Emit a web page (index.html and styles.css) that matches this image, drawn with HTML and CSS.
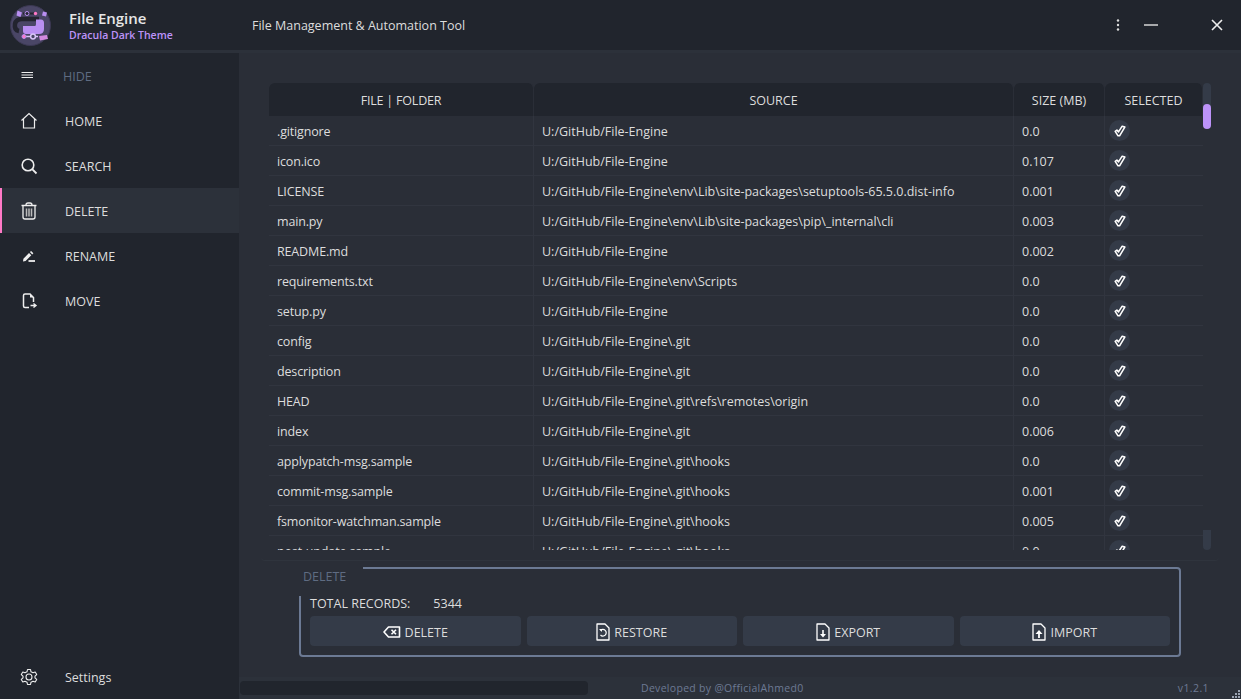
FILE: index.html
```html
<!DOCTYPE html>
<html lang="en">
<head>
    <meta charset="UTF-8">
    <title>File Engine</title>
    <link rel="stylesheet" href="styles.css">
</head>
<body>
    <svg class="defs" width="0" height="0">
        <symbol id="check" viewBox="0 0 16 16">
            <path d="M2.5 8.5 L4.5 7 L6.3 9 L10.5 2.5 L13.5 3.5 L7.5 13.5 L5.8 13.5 Z" fill="#343b48" stroke="#fff" stroke-width="1.8" stroke-linejoin="round"/>
        </symbol>
    </svg>

    <header class="titlebar">
        <div class="brand">
            <svg class="logo" width="41" height="41" viewBox="0 0 41 41">
                <circle cx="20.5" cy="20.5" r="20" fill="#4a4666" stroke="#3c3953"/>
                <path d="M9 26 Q4 25 5 19 Q6 14 12 14 H29" fill="none" stroke="#23242f" stroke-width="4.5"/>
                <path d="M13 8.5 H26" stroke="#23242f" stroke-width="2"/>
                <path d="M13 21 H25 Q26 21 26 19 V14.5 H31 Q34 14.5 34 18 V24 Q34 29 29 29 H16 Q13 29 13 26 Z" fill="#b98ff2"/>
                <path d="M7.5 5.5 L12 7.5 L10.5 12 L6.5 10.5 Z M33 6.5 L37 7.5 L36 11.5 L32 10.5 Z" fill="#b98ff2"/>
                <circle cx="17" cy="8.5" r="2" fill="#23242f" stroke="#b98ff2"/>
                <circle cx="25.5" cy="8.5" r="1.7" fill="#ff79c6"/>
                <path d="M16 31.5 H28" stroke="#d8c4f8" stroke-width="1.5"/>
                <circle cx="14" cy="31.5" r="2" fill="#ff79c6" stroke="#b98ff2"/>
                <circle cx="23" cy="31.5" r="2.4" fill="#4a4666" stroke="#d8c4f8" stroke-width="1.5"/>
                <path d="M29 31 L37 30 L38 34 L30 35.5 Z" fill="#d289e0"/>
            </svg>
            <div class="brand-text">
                <div class="app-name">File Engine</div>
                <div class="app-theme">Dracula Dark Theme</div>
            </div>
        </div>
        <div class="app-desc">File Management &amp; Automation Tool</div>
        <div class="win-btns">
            <svg width="16" height="16" viewBox="0 0 16 16"><circle cx="8" cy="3.5" r="1.2" fill="#ddd"/><circle cx="8" cy="8" r="1.2" fill="#ddd"/><circle cx="8" cy="12.5" r="1.2" fill="#ddd"/></svg>
            <svg class="win-min" width="16" height="16" viewBox="0 0 16 16"><path d="M1 8 H15" stroke="#ccc" stroke-width="1.6"/></svg>
            <svg class="win-close" width="16" height="16" viewBox="0 0 16 16"><path d="M3 3 L13 13 M13 3 L3 13" stroke="#eee" stroke-width="1.6"/></svg>
        </div>
    </header>

    <div class="body-wrap">
        <nav class="sidebar">
            <div class="nav-item nav-hide">
                <svg width="16" height="18" viewBox="0 0 16 18"><path d="M1.5 5.5 H13 M1.5 8 H13 M1.5 10.5 H13" stroke="#eee" stroke-width="1.2"/></svg>
                <span>HIDE</span>
            </div>
            <div class="nav-item">
                <svg width="18" height="18" viewBox="0 0 18 18"><path d="M1.5 8.5 L9 1.5 L16.5 8.5 M3.5 7 V16 H14.5 V7" fill="none" stroke="#eee" stroke-width="1.2"/></svg>
                <span>HOME</span>
            </div>
            <div class="nav-item">
                <svg width="18" height="18" viewBox="0 0 18 18"><circle cx="8" cy="8" r="5.8" fill="none" stroke="#eee" stroke-width="1.6"/><path d="M12.2 12.2 L16.5 16.5" stroke="#eee" stroke-width="1.8"/></svg>
                <span>SEARCH</span>
            </div>
            <div class="nav-item active">
                <svg width="18" height="18" viewBox="0 0 18 18"><path d="M1.5 3.5 H16.5 M6 3 Q6 1 8 1 H10 Q12 1 12 3 M3 4 V15 Q3 17 5 17 H13 Q15 17 15 15 V4" fill="none" stroke="#eee" stroke-width="1.3"/><path d="M6.5 6.5 V14.5 M9 6.5 V14.5 M11.5 6.5 V14.5" stroke="#bbb" stroke-width="1.5"/></svg>
                <span>DELETE</span>
            </div>
            <div class="nav-item">
                <svg width="18" height="18" viewBox="0 0 18 18"><path d="M3 14.5 L3.4 11.8 L9 6 L11.3 8.3 L5.6 14 Z M9.9 5.1 L11.1 3.9 L13.4 6.2 L12.2 7.4 Z" fill="#eee"/><path d="M8.5 14 H15" stroke="#eee" stroke-width="1.8"/></svg>
                <span>RENAME</span>
            </div>
            <div class="nav-item">
                <svg width="18" height="18" viewBox="0 0 18 18"><path d="M9 15.5 H5 Q3.5 15.5 3.5 14 V3.5 Q3.5 2 5 2 H10 L13.5 5.5 V10" fill="none" stroke="#eee" stroke-width="1.5"/><path d="M10 2 V5.5 H13.5 Z" fill="#eee"/><path d="M10.5 13.5 H15.5 M13.5 11.5 L16 13.5 L13.5 15.5" fill="none" stroke="#eee" stroke-width="1.4"/></svg>
                <span>MOVE</span>
            </div>
            <div class="nav-item nav-settings">
                <svg width="18" height="18" viewBox="0 0 18 18"><path d="M7.5 1.5 H10.5 L11 3.8 L13 4.8 L15.2 4 L16.7 6.6 L15 8.1 V9.9 L16.7 11.4 L15.2 14 L13 13.2 L11 14.2 L10.5 16.5 H7.5 L7 14.2 L5 13.2 L2.8 14 L1.3 11.4 L3 9.9 V8.1 L1.3 6.6 L2.8 4 L5 4.8 L7 3.8 Z" fill="none" stroke="#eee" stroke-width="1.1" stroke-linejoin="round"/><circle cx="9" cy="9" r="3" fill="none" stroke="#eee" stroke-width="1.1"/></svg>
                <span>Settings</span>
            </div>
        </nav>

        <main class="content">
            <section class="table-panel">
                <div class="table-wrap">
                    <div class="table">
                        <div class="row head">
                            <div>FILE | FOLDER</div>
                            <div>SOURCE</div>
                            <div>SIZE (MB)</div>
                            <div>SELECTED</div>
                        </div>
                        <div class="table-body">
                            <div class="row"><div>.gitignore</div><div>U:/GitHub/File-Engine</div><div>0.0</div><div><span class="tick"><svg width="14" height="14"><use href="#check"/></svg></span></div></div>
                            <div class="row"><div>icon.ico</div><div>U:/GitHub/File-Engine</div><div>0.107</div><div><span class="tick"><svg width="14" height="14"><use href="#check"/></svg></span></div></div>
                            <div class="row"><div>LICENSE</div><div>U:/GitHub/File-Engine\env\Lib\site-packages\setuptools-65.5.0.dist-info</div><div>0.001</div><div><span class="tick"><svg width="14" height="14"><use href="#check"/></svg></span></div></div>
                            <div class="row"><div>main.py</div><div>U:/GitHub/File-Engine\env\Lib\site-packages\pip\_internal\cli</div><div>0.003</div><div><span class="tick"><svg width="14" height="14"><use href="#check"/></svg></span></div></div>
                            <div class="row"><div>README.md</div><div>U:/GitHub/File-Engine</div><div>0.002</div><div><span class="tick"><svg width="14" height="14"><use href="#check"/></svg></span></div></div>
                            <div class="row"><div>requirements.txt</div><div>U:/GitHub/File-Engine\env\Scripts</div><div>0.0</div><div><span class="tick"><svg width="14" height="14"><use href="#check"/></svg></span></div></div>
                            <div class="row"><div>setup.py</div><div>U:/GitHub/File-Engine</div><div>0.0</div><div><span class="tick"><svg width="14" height="14"><use href="#check"/></svg></span></div></div>
                            <div class="row"><div>config</div><div>U:/GitHub/File-Engine\.git</div><div>0.0</div><div><span class="tick"><svg width="14" height="14"><use href="#check"/></svg></span></div></div>
                            <div class="row"><div>description</div><div>U:/GitHub/File-Engine\.git</div><div>0.0</div><div><span class="tick"><svg width="14" height="14"><use href="#check"/></svg></span></div></div>
                            <div class="row"><div>HEAD</div><div>U:/GitHub/File-Engine\.git\refs\remotes\origin</div><div>0.0</div><div><span class="tick"><svg width="14" height="14"><use href="#check"/></svg></span></div></div>
                            <div class="row"><div>index</div><div>U:/GitHub/File-Engine\.git</div><div>0.006</div><div><span class="tick"><svg width="14" height="14"><use href="#check"/></svg></span></div></div>
                            <div class="row"><div>applypatch-msg.sample</div><div>U:/GitHub/File-Engine\.git\hooks</div><div>0.0</div><div><span class="tick"><svg width="14" height="14"><use href="#check"/></svg></span></div></div>
                            <div class="row"><div>commit-msg.sample</div><div>U:/GitHub/File-Engine\.git\hooks</div><div>0.001</div><div><span class="tick"><svg width="14" height="14"><use href="#check"/></svg></span></div></div>
                            <div class="row"><div>fsmonitor-watchman.sample</div><div>U:/GitHub/File-Engine\.git\hooks</div><div>0.005</div><div><span class="tick"><svg width="14" height="14"><use href="#check"/></svg></span></div></div>
                            <div class="row"><div>post-update.sample</div><div>U:/GitHub/File-Engine\.git\hooks</div><div>0.0</div><div><span class="tick"><svg width="14" height="14"><use href="#check"/></svg></span></div></div>
                        </div>
                    </div>
                    <div class="scrollbar">
                        <div class="scroll-cap"></div>
                        <div class="scroll-handle"></div>
                        <div class="scroll-cap scroll-cap-end"></div>
                    </div>
                </div>
            </section>

            <section class="group">
                <div class="group-label">DELETE</div>
                <div class="records"><span>TOTAL RECORDS:</span><span>5344</span></div>
                <div class="actions">
                    <button class="btn">
                        <svg width="18" height="16" viewBox="0 0 18 16"><path d="M1 8 L5.5 3 H16.5 V13 H5.5 Z" fill="none" stroke="#fff" stroke-width="1.6" stroke-linejoin="round"/><path d="M8.5 5.8 L13 10.2 M13 5.8 L8.5 10.2" stroke="#fff" stroke-width="1.6"/></svg>
                        DELETE
                    </button>
                    <button class="btn">
                        <svg width="14" height="18" viewBox="0 0 14 18"><path d="M1 1 H9 L13 5 V17 H1 Z" fill="none" stroke="#fff" stroke-width="1.3" stroke-linejoin="round"/><path d="M4.5 7.5 A3.3 3.3 0 1 1 4.5 12" fill="none" stroke="#fff" stroke-width="1.2"/><path d="M3 6 H6 V9 Z" fill="#fff"/></svg>
                        RESTORE
                    </button>
                    <button class="btn">
                        <svg width="14" height="18" viewBox="0 0 14 18"><path d="M1 1 H9 L13 5 V17 H1 Z" fill="none" stroke="#fff" stroke-width="1.3" stroke-linejoin="round"/><path d="M7 7 V12" stroke="#fff" stroke-width="1.6"/><path d="M4 11 H10 L7 14.5 Z" fill="#fff"/></svg>
                        EXPORT
                    </button>
                    <button class="btn">
                        <svg width="14" height="18" viewBox="0 0 14 18"><path d="M1 1 H9 L13 5 V17 H1 Z" fill="none" stroke="#fff" stroke-width="1.3" stroke-linejoin="round"/><path d="M7 10 V15" stroke="#fff" stroke-width="1.8"/><path d="M3.5 11 H10.5 L7 7 Z" fill="#fff"/></svg>
                        IMPORT
                    </button>
                </div>
            </section>

            <footer class="statusbar">
                <div class="status-progress"></div>
                <div class="status-credit">Developed by @OfficialAhmed0</div>
                <div class="status-version">v1.2.1</div>
                <svg class="grip" width="10" height="10" viewBox="0 0 10 10"><path d="M7 1 h2 v2 h-2 z M4 4 h2 v2 h-2 z M7 4 h2 v2 h-2 z M1 7 h2 v2 h-2 z M4 7 h2 v2 h-2 z M7 7 h2 v2 h-2 z" fill="#9aa3b2"/></svg>
            </footer>
        </main>
    </div>
</body>
</html>
```

FILE: styles.css
```css
* {
    box-sizing: border-box;
}

body {
    margin: 0;
    width: 1241px;
    height: 699px;
    overflow: hidden;
    display: flex;
    flex-direction: column;
    background-color: #21252b;
    color: #dddddd;
    font-family: "Open Sans", "Noto Sans", sans-serif;
    font-size: 12.5px;
}

.defs {
    position: absolute;
}

/* title bar */
.titlebar {
    height: 53px;
    flex: none;
    display: flex;
    align-items: center;
    background-color: #21252d;
    border-bottom: 3px solid #2c313a;
}

.brand {
    width: 239px;
    display: flex;
    align-items: center;
    padding-left: 10px;
}

.logo {
    flex: none;
    margin-top: 1px;
}

.brand-text {
    margin-left: 18px;
    padding-top: 2px;
}

.app-name {
    font-size: 15px;
    font-weight: 600;
    line-height: 16px;
    margin-bottom: 2px;
    color: #e6e6e6;
}

.app-theme {
    font-size: 10.5px;
    font-weight: 600;
    line-height: 14px;
    color: #bd93f9;
}

.app-desc {
    margin-left: 13px;
    flex: 1;
}

.win-btns {
    display: flex;
    align-items: center;
    padding-right: 16px;
}

.win-min {
    margin-left: 17px;
}

.win-close {
    margin-left: 50px;
}

/* layout */
.body-wrap {
    flex: 1;
    display: flex;
    min-height: 0;
}

/* sidebar */
.sidebar {
    width: 239px;
    flex: none;
    display: flex;
    flex-direction: column;
    background-color: #21252d;
}

.nav-item {
    height: 45px;
    flex: none;
    display: flex;
    align-items: center;
    padding-left: 20px;
}

.nav-item span {
    margin-left: 27px;
    padding-top: 1px;
}

.nav-hide {
    color: #5f6c82;
}

.nav-item.active {
    background-color: #2c313a;
    border-left: 2px solid #ff79c6;
    padding-left: 18px;
}

.nav-settings {
    margin-top: auto;
}

/* content */
.content {
    flex: 1;
    min-width: 0;
    display: flex;
    flex-direction: column;
    background-color: #2a2e37;
}

.table-panel {
    height: 508px;
    flex: none;
    padding: 30px 0 0 8px;
    margin: 0 22px;
    border-bottom: 1px solid #2f343d;
    border-radius: 0 0 4px 4px;
}

.table-wrap {
    display: flex;
    height: 467px;
}

.table {
    width: 934px;
    flex: none;
    display: flex;
    flex-direction: column;
}

.row {
    display: grid;
    grid-template-columns: 265px 480px 91px 98px;
    height: 30px;
    flex: none;
    border-bottom: 1px solid #31353f;
}

.row > div {
    display: flex;
    align-items: center;
    padding: 2px 0 0 8px;
    border-right: 1px solid #31353f;
    white-space: nowrap;
    overflow: hidden;
}

.row > div:first-child {
    letter-spacing: -0.15px;
}

.row > div:last-child {
    padding: 0 0 0 4px;
    border-right: none;
}

.head {
    height: 33px;
    border-bottom: none;
}

.head > div,
.head > div:first-child,
.head > div:last-child {
    justify-content: center;
    padding: 2px 0 0 0;
    background-color: #21252d;
    border-right: 1px solid #2a2e37;
    border-radius: 6px 6px 0 0;
}

.head > div:first-child {
    letter-spacing: -0.2px;
}

.table-body {
    flex: 1;
    overflow: hidden;
}

.tick {
    width: 21px;
    height: 21px;
    border-radius: 50%;
    background-color: #343b48;
    display: flex;
    align-items: center;
    justify-content: center;
}

.scrollbar {
    width: 8px;
    flex: none;
    height: 467px;
    display: flex;
    flex-direction: column;
}

.scroll-cap {
    height: 24px;
    background-color: #343b48;
    border-radius: 4px 4px 0 0;
    margin-bottom: -3px;
}

.scroll-cap-end {
    height: 20px;
    margin-top: auto;
    margin-bottom: 0;
    border-radius: 0 0 4px 4px;
}

.scroll-handle {
    height: 25px;
    position: relative;
    background-color: #bd93f9;
    border-radius: 4px;
}

/* group box */
.group {
    position: relative;
    height: 90px;
    margin: 6px 60px 0 60px;
    padding: 24px 9px 0 9px;
    border: 2px solid #6c7a94;
    border-radius: 4px;
}

.group-label {
    position: absolute;
    left: -4px;
    top: -8px;
    width: 66px;
    height: 35px;
    padding: 7px 0 0 6px;
    background-color: #2a2e37;
    color: #5f6c82;
}

.records {
    display: flex;
    gap: 23px;
    height: 21px;
    align-items: center;
    margin-bottom: 2px;
}

.actions {
    display: grid;
    grid-template-columns: repeat(4, 1fr);
    gap: 6px;
}

.btn {
    height: 30px;
    display: flex;
    align-items: center;
    justify-content: center;
    gap: 4px;
    padding: 2px 0 0 0;
    border: none;
    border-radius: 4px;
    background-color: #343b48;
    color: #dddddd;
    font: inherit;
}

/* status bar */
.statusbar {
    position: relative;
    height: 22px;
    margin-top: auto;
    display: flex;
    align-items: center;
    background-color: #2c313a;
    color: #6c7a94;
    font-size: 10.5px;
    padding-left: 1px;
}

.status-progress {
    width: 348px;
    height: 14px;
    background-color: #21252d;
    border-radius: 4px;
}

.status-credit {
    margin-left: 53px;
    letter-spacing: 0.3px;
}

.status-version {
    margin-left: auto;
    margin-right: 32px;
    letter-spacing: 0.4px;
}

.grip {
    position: absolute;
    right: 0;
    bottom: 0;
}
```
